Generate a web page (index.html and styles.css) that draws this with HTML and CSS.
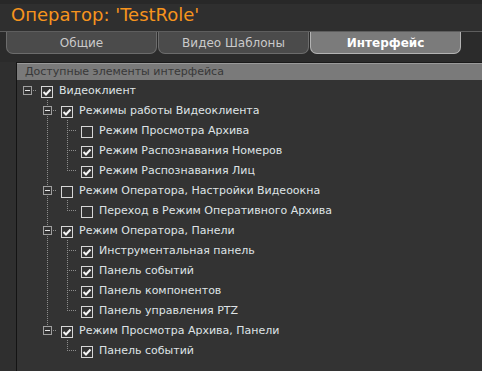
FILE: index.html
```html
<!DOCTYPE html>
<html lang="ru">
<head>
    <meta charset="UTF-8">
    <title>Оператор: 'TestRole'</title>
    <link rel="stylesheet" href="styles.css">
</head>
<body>
    <div class="window">
        <div class="title">Оператор: 'TestRole'</div>
        <div class="tabs">
            <div class="tab">Общие</div>
            <div class="tab">Видео Шаблоны</div>
            <div class="tab active">Интерфейс</div>
        </div>
        <div class="panel">
            <div class="panel-head">Доступные элементы интерфейса</div>
            <div class="tree">
                <div class="row">
                    <span class="c exp root"><i class="box"></i></span>
                    <span class="chk on"><svg viewBox="0 0 10 10"><polyline points="1.5,5 4,7.5 8.5,2.5"/></svg></span>
                    <span class="label">Видеоклиент</span>
                </div>
                <div class="row">
                    <span class="c"></span><span class="c exp"><i class="box"></i></span>
                    <span class="chk on"><svg viewBox="0 0 10 10"><polyline points="1.5,5 4,7.5 8.5,2.5"/></svg></span>
                    <span class="label">Режимы работы Видеоклиента</span>
                </div>
                <div class="row">
                    <span class="c"></span><span class="c v"></span><span class="c tee"></span>
                    <span class="chk"></span>
                    <span class="label">Режим Просмотра Архива</span>
                </div>
                <div class="row">
                    <span class="c"></span><span class="c v"></span><span class="c tee"></span>
                    <span class="chk on"><svg viewBox="0 0 10 10"><polyline points="1.5,5 4,7.5 8.5,2.5"/></svg></span>
                    <span class="label">Режим Распознавания Номеров</span>
                </div>
                <div class="row">
                    <span class="c"></span><span class="c v"></span><span class="c end"></span>
                    <span class="chk on"><svg viewBox="0 0 10 10"><polyline points="1.5,5 4,7.5 8.5,2.5"/></svg></span>
                    <span class="label">Режим Распознавания Лиц</span>
                </div>
                <div class="row">
                    <span class="c"></span><span class="c exp"><i class="box"></i></span>
                    <span class="chk"></span>
                    <span class="label">Режим Оператора, Настройки Видеоокна</span>
                </div>
                <div class="row">
                    <span class="c"></span><span class="c v"></span><span class="c end"></span>
                    <span class="chk"></span>
                    <span class="label">Переход в Режим Оперативного Архива</span>
                </div>
                <div class="row">
                    <span class="c"></span><span class="c exp"><i class="box"></i></span>
                    <span class="chk on"><svg viewBox="0 0 10 10"><polyline points="1.5,5 4,7.5 8.5,2.5"/></svg></span>
                    <span class="label">Режим Оператора, Панели</span>
                </div>
                <div class="row">
                    <span class="c"></span><span class="c v"></span><span class="c tee"></span>
                    <span class="chk on"><svg viewBox="0 0 10 10"><polyline points="1.5,5 4,7.5 8.5,2.5"/></svg></span>
                    <span class="label">Инструментальная панель</span>
                </div>
                <div class="row">
                    <span class="c"></span><span class="c v"></span><span class="c tee"></span>
                    <span class="chk on"><svg viewBox="0 0 10 10"><polyline points="1.5,5 4,7.5 8.5,2.5"/></svg></span>
                    <span class="label">Панель событий</span>
                </div>
                <div class="row">
                    <span class="c"></span><span class="c v"></span><span class="c tee"></span>
                    <span class="chk on"><svg viewBox="0 0 10 10"><polyline points="1.5,5 4,7.5 8.5,2.5"/></svg></span>
                    <span class="label">Панель компонентов</span>
                </div>
                <div class="row">
                    <span class="c"></span><span class="c v"></span><span class="c end"></span>
                    <span class="chk on"><svg viewBox="0 0 10 10"><polyline points="1.5,5 4,7.5 8.5,2.5"/></svg></span>
                    <span class="label">Панель управления PTZ</span>
                </div>
                <div class="row">
                    <span class="c"></span><span class="c exp last"><i class="box"></i></span>
                    <span class="chk on"><svg viewBox="0 0 10 10"><polyline points="1.5,5 4,7.5 8.5,2.5"/></svg></span>
                    <span class="label">Режим Просмотра Архива, Панели</span>
                </div>
                <div class="row">
                    <span class="c"></span><span class="c"></span><span class="c end"></span>
                    <span class="chk on"><svg viewBox="0 0 10 10"><polyline points="1.5,5 4,7.5 8.5,2.5"/></svg></span>
                    <span class="label">Панель событий</span>
                </div>
            </div>
        </div>
    </div>
</body>
</html>
```

FILE: styles.css
```css
body {
    margin: 0;
    background-color: #2f2f2f;
    font-family: "DejaVu Sans", sans-serif;
}
.window {
    width: 482px;
    height: 371px;
    overflow: hidden;
    display: flex;
    flex-direction: column;
    border-top: 4px solid #282828;
    box-sizing: border-box;
}
.title {
    height: 27px;
    padding-left: 11px;
    color: #f7941d;
    font-size: 18px;
    line-height: 22px;
    box-sizing: border-box;
}
.tabs {
    display: flex;
    padding-left: 6px;
    border-top: 1px solid #5e5e5e;
    background: #2b2b2b;
    height: 31px;
    box-sizing: border-box;
}
.tab {
    width: 151px;
    height: 22px;
    margin-right: 1px;
    box-sizing: border-box;
    border: 1px solid #6c6c6c;
    border-top: none;
    border-radius: 0 0 7px 7px;
    background: #4b4b4b;
    color: #cacaca;
    font-size: 12px;
    text-align: center;
    line-height: 22px;
}
.tab.active {
    background: #7b7b7b;
    border-color: #b3b3b3;
    color: #ffffff;
    font-weight: bold;
}
.panel {
    flex: 1;
    margin-left: 16px;
    border-left: 1px solid #141414;
    border-top: 1px solid #1a1a1a;
    background: #333333;
}
.panel-head {
    height: 16px;
    padding-left: 8px;
    border-top: 1px solid #9a9a9a;
    background: #7a7a7a;
    color: #383838;
    font-size: 11px;
    line-height: 15px;
}
.row {
    display: flex;
    align-items: flex-start;
    height: 20px;
}
.c {
    flex: none;
    width: 20px;
    height: 20px;
}
.v {
    background: repeating-linear-gradient(to bottom, #8c8c8c 0 1px, transparent 1px 2px) 10px 0 / 1px 20px no-repeat;
}
.tee {
    background:
        repeating-linear-gradient(to bottom, #8c8c8c 0 1px, transparent 1px 2px) 10px 0 / 1px 20px no-repeat,
        repeating-linear-gradient(to right, #8c8c8c 0 1px, transparent 1px 2px) 12px 10px / 8px 1px no-repeat;
}
.end {
    background:
        repeating-linear-gradient(to bottom, #8c8c8c 0 1px, transparent 1px 2px) 10px 0 / 1px 11px no-repeat,
        repeating-linear-gradient(to right, #8c8c8c 0 1px, transparent 1px 2px) 12px 10px / 8px 1px no-repeat;
}
.exp {
    background:
        repeating-linear-gradient(to bottom, #8c8c8c 0 1px, transparent 1px 2px) 10px 0 / 1px 20px no-repeat,
        repeating-linear-gradient(to right, #8c8c8c 0 1px, transparent 1px 2px) 16px 10px / 5px 1px no-repeat;
}
.exp.root {
    background: repeating-linear-gradient(to right, #8c8c8c 0 1px, transparent 1px 2px) 16px 10px / 5px 1px no-repeat;
}
.exp.last {
    background:
        repeating-linear-gradient(to bottom, #8c8c8c 0 1px, transparent 1px 2px) 10px 0 / 1px 6px no-repeat,
        repeating-linear-gradient(to right, #8c8c8c 0 1px, transparent 1px 2px) 16px 10px / 5px 1px no-repeat;
}
.box {
    display: flex;
    align-items: center;
    justify-content: center;
    width: 9px;
    height: 9px;
    margin: 6px 0 0 6px;
    box-sizing: border-box;
    border: 1px solid #a0a0a0;
    background: #333333;
}
.box::before {
    content: "";
    width: 5px;
    height: 1px;
    background: #e6e6e6;
}
.chk {
    flex: none;
    width: 12px;
    height: 12px;
    margin: 6px 0 0 4px;
    box-sizing: border-box;
    border: 1px solid #d6d6d6;
    display: flex;
}
.chk svg {
    width: 10px;
    height: 10px;
    fill: none;
    stroke: #f2f2f2;
    stroke-width: 2;
}
.label {
    margin-left: 6px;
    color: #dfe3e6;
    font-size: 11px;
    line-height: 22px;
    white-space: nowrap;
}
```
